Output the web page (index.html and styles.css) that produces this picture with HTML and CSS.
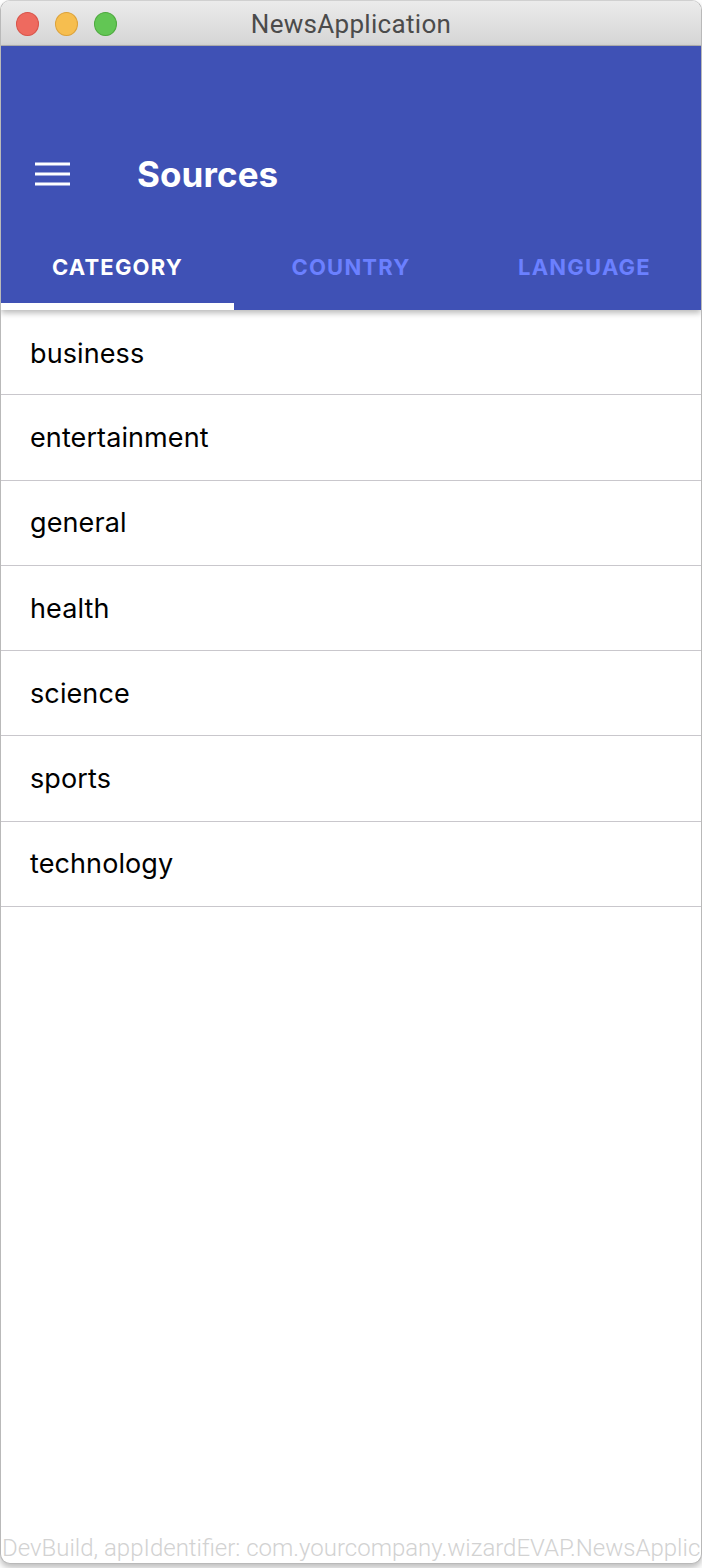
FILE: index.html
```html
<!DOCTYPE html>
<html lang="en">
<head>
<meta charset="utf-8">
<title>NewsApplication</title>
<link rel="stylesheet" href="styles.css">
</head>
<body>
<div class="window">
  <div class="titlebar">
    <div class="lights">
      <span class="light red"></span>
      <span class="light yellow"></span>
      <span class="light green"></span>
    </div>
    <div class="wintitle">NewsApplication</div>
  </div>
  <header class="appbar">
    <div class="toolbar">
      <svg class="menu" width="36" height="24" viewBox="0 0 36 24" aria-hidden="true">
        <rect x="0" y="0.5" width="35" height="3" fill="#fff"/>
        <rect x="0" y="10.5" width="35" height="3" fill="#fff"/>
        <rect x="0" y="20.5" width="35" height="3" fill="#fff"/>
      </svg>
      <h1 class="title">Sources</h1>
    </div>
    <nav class="tabs">
      <div class="tab active">CATEGORY</div>
      <div class="tab">COUNTRY</div>
      <div class="tab">LANGUAGE</div>
    </nav>
  </header>
  <ul class="list">
    <li>business</li>
    <li>entertainment</li>
    <li>general</li>
    <li>health</li>
    <li>science</li>
    <li>sports</li>
    <li>technology</li>
  </ul>
  <div class="devbuild">DevBuild, appIdentifier: com.yourcompany.wizardEVAP.NewsApplication</div>
</div>
</body>
</html>
```

FILE: styles.css
```css
html, body {
  margin: 0;
  padding: 0;
}
body {
  background: #ffffff;
  width: 702px;
  height: 1568px;
  overflow: hidden;
  font-family: Inter, Roboto, "Liberation Sans", sans-serif;
}
.window {
  width: 700px;
  height: 1562px;
  border: 1px solid #b9b9b9;
  border-top-color: #d0d0d0;
  border-radius: 10px;
  overflow: hidden;
  display: flex;
  flex-direction: column;
  background: #fff;
  box-shadow: 0 4px 6px rgba(0,0,0,0.25);
}
.titlebar {
  height: 44px;
  flex: none;
  background: linear-gradient(#ebebeb, #d5d5d5);
  border-bottom: 1px solid #b1b1b1;
  position: relative;
  display: flex;
  align-items: center;
  justify-content: center;
}
.lights {
  position: absolute;
  left: 15px;
  top: 11px;
  display: flex;
  gap: 16px;
}
.light {
  width: 23px;
  height: 24px;
  border-radius: 50%;
  box-sizing: border-box;
}
.red { background: #ee6a5f; border: 1px solid #d8544a; }
.yellow { background: #f6be4f; border: 1px solid #dca23a; }
.green { background: #62c654; border: 1px solid #4ea93f; }
.wintitle {
  font-family: Roboto, "Liberation Sans", sans-serif;
  font-size: 26px;
  letter-spacing: 0.3px;
  color: #4b4b4b;
  margin-top: 2px;
}
.appbar {
  flex: none;
  background: #3f51b5;
  box-shadow: 0 3px 6px rgba(0,0,0,0.28);
  position: relative;
  z-index: 1;
}
.toolbar {
  height: 184px;
  box-sizing: border-box;
  padding: 108px 0 36px 34px;
  display: flex;
  align-items: center;
}
.menu {
  flex: none;
}
.title {
  margin: 0 0 0 66px;
  font-size: 35px;
  font-weight: 700;
  letter-spacing: 0.1px;
  color: #fff;
  line-height: 40px;
}
.tabs {
  height: 80px;
  display: grid;
  grid-template-columns: 233px 234px 233px;
}
.tab {
  display: flex;
  align-items: center;
  justify-content: center;
  padding-bottom: 7px;
  font-size: 22px;
  font-weight: 700;
  letter-spacing: 1.2px;
  color: #6b80ff;
  box-sizing: border-box;
}
.tab.active {
  color: #ffffff;
  border-bottom: 7px solid #ffffff;
  padding-bottom: 0;
}
.list {
  list-style: none;
  margin: 0;
  padding: 0;
}
.list li {
  height: 84.3px;
  box-sizing: content-box;
  border-bottom: 1px solid #c9c7cc;
  display: flex;
  align-items: center;
  padding-left: 29px;
  padding-top: 2px;
  margin-top: -2px;
  font-size: 27px;
  letter-spacing: 0.1px;
  color: #000;
}
.list li:first-child {
  margin-top: 0;
  height: 82.3px;
}
.devbuild {
  margin-top: auto;
  padding: 0 0 1px 1px;
  line-height: 28px;
  white-space: nowrap;
  overflow: hidden;
  font-family: Roboto, "Liberation Sans", sans-serif;
  font-weight: 300;
  font-size: 24px;
  color: #d2d2d2;
}
```
